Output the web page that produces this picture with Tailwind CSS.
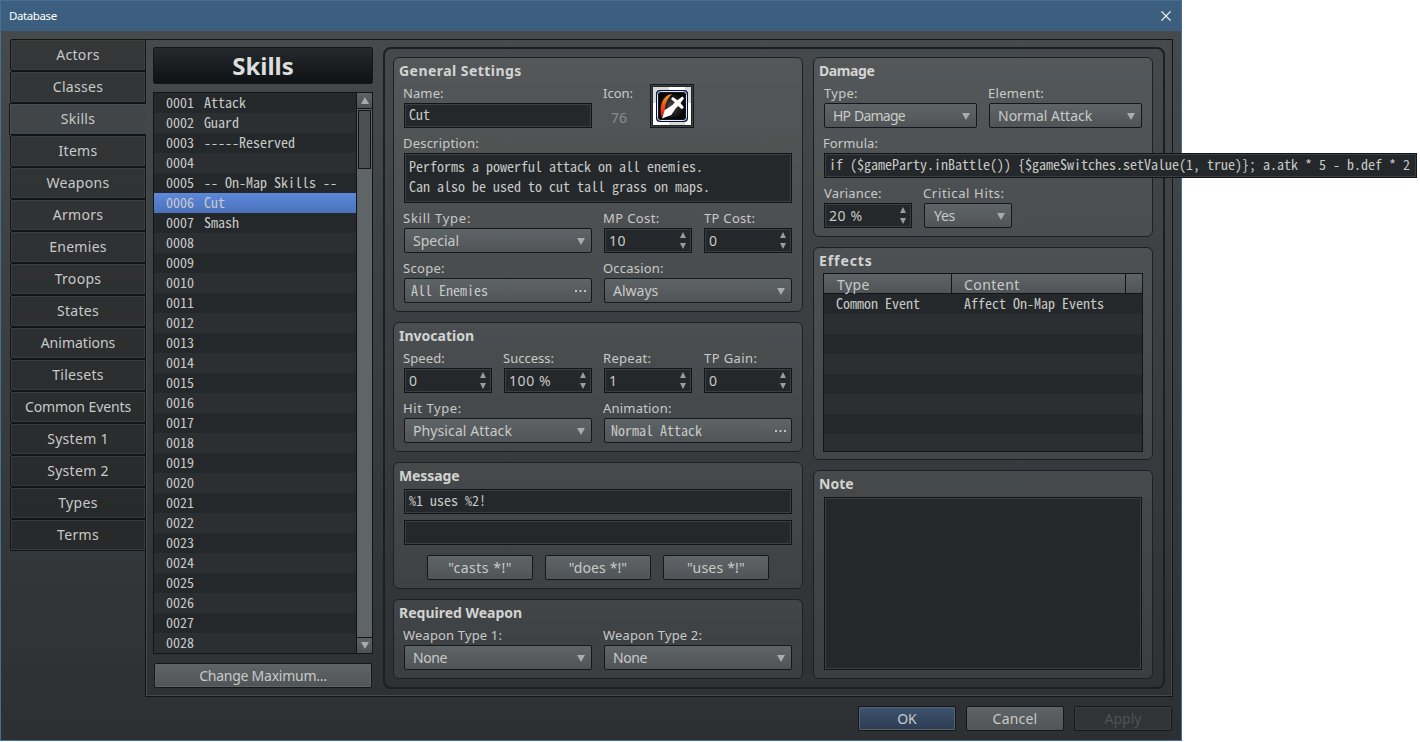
<!DOCTYPE html>
<html lang="en">
<head>
    <meta charset="UTF-8">
    <meta name="viewport" content="width=device-width, initial-scale=1.0">
    <title>Database</title>
    <script src="https://cdn.jsdelivr.net/npm/@tailwindcss/browser@4"></script>
</head>
<body class="bg-white h-[742px] overflow-hidden font-['Noto_Sans','Open_Sans',sans-serif] text-sm text-[#c8cac8]">
    <div class="w-[1182px] h-[741px] border border-[#476e93] bg-linear-to-b from-[#484b4d] to-[#2d3032] flex flex-col">
        <!-- Title bar -->
        <div class="h-[30px] shrink-0 bg-[#3c5f80] flex items-center justify-between pl-2 pr-[10px] text-white">
            <span class="text-[11.5px] leading-[30px] tracking-[-0.4px]">Database</span>
            <svg class="w-2.5 h-2.5 -mt-px" viewBox="0 0 11 11" fill="none" stroke="#fff" stroke-width="1.3"><path d="M.5.5l10 10M10.5.5l-10 10"/></svg>
        </div>

        <div class="flex pl-2 pt-2 h-[666px] shrink-0">
            <!-- Category tabs -->
            <div id="tabs" class="w-[137px] shrink-0 text-center text-[14px] leading-[30px] relative z-10"></div>

            <!-- Tab page -->
            <div class="w-[1028px] h-[658px] -ml-px border border-[#121517] shadow-[inset_0_0_0_1px_#45494b] flex pl-[7px] pt-[7px]">
                <!-- Skill list -->
                <div class="w-[220px] shrink-0">
                    <div class="h-[37px] border border-[#15181a] rounded-xs bg-linear-to-b from-[#262a2c] to-[#0f1214] text-center text-[24px] leading-[36px] font-bold text-[#dcdedc]">Skills</div>
                    <div class="mt-2 h-[562px] border border-[#121517] flex">
                        <div id="skills" class="w-[202px] shrink-0 font-['Noto_Sans_Mono_CJK_JP','Liberation_Mono',monospace] text-[14px] leading-[18px] whitespace-pre"></div>
                        <div class="w-4 border-l border-[#121517] bg-[#5f6466] flex flex-col justify-between shrink-0">
                            <div>
                                <div class="h-[15px] bg-linear-to-b from-[#5e6264] to-[#4d5153] flex items-center justify-center"><svg class="w-2 h-[7px]" viewBox="0 0 8 7" fill="#a9abac"><path d="M4 0l4 7H0z"/></svg></div>
                                <div class="h-px bg-[#121517]"></div>
                                <div class="h-[59px] mt-px mx-px border border-[#121517] bg-[#4b4f51]"></div>
                            </div>
                            <div class="h-4 border-t border-[#121517] bg-linear-to-b from-[#5e6264] to-[#4d5153] flex items-center justify-center"><svg class="w-2 h-[7px]" viewBox="0 0 8 7" fill="#a9abac"><path d="M4 7l4-7H0z"/></svg></div>
                        </div>
                    </div>
                    <button class="block mt-[9px] ml-px w-[218px] h-[25px] border border-[#15181a] rounded-xs bg-linear-to-b from-[#5f6466] to-[#505456] shadow-[inset_0_0_0_1px_#5f6466] leading-[24px] tracking-[-0.25px]">Change Maximum...</button>
                </div>

                <!-- Skill details -->
                <div class="ml-[10px] w-[782px] h-[642px] border-2 border-[#1c1f21] rounded-lg flex gap-[10px] pl-2 pt-2">
                    <div class="w-[410px] flex flex-col gap-[10px]">
                        <!-- General Settings -->
                        <section class="h-[255px] border border-[#1d2022] rounded-md bg-linear-to-b from-white/8 to-white/6 pl-[5px]">
                            <h2 class="h-[25px] leading-[26px] font-bold text-[#d2d4d2] tracking-[0.45px]">General Settings</h2>
                            <div class="ml-[5px] w-[388px]">
                                <div class="flex gap-3">
                                    <div class="w-[188px]">
                                        <div class="h-5 -ml-px leading-5 text-[13px] tracking-[0.1px]">Name:</div>
                                        <div class="h-[25px] border border-[#121517] bg-[#24282a] shadow-[inset_0_0_0_1px_#3b3f41] pl-1 leading-[21px] font-['Noto_Sans_Mono_CJK_JP','Liberation_Mono',monospace]">Cut</div>
                                    </div>
                                    <div class="w-[34px]">
                                        <div class="h-5 -ml-px leading-5 text-[13px]">Icon:</div>
                                        <div class="h-[25px] pl-[7px] leading-[29px] text-[#888c8d]">76</div>
                                    </div>
                                    <svg class="w-11 h-11 mt-px" viewBox="0 0 44 44">
                                        <path fill="#14171a" d="M0 0h44v44H0z"/>
                                        <path fill="#3b3f41" d="M1 1h42v42H1z"/>
                                        <path fill="#24282a" d="M2 2h40v40H2z"/>
                                        <path fill="#fff" d="M3 3h38v38H3z"/>
                                        <path fill="#d9d9d9" d="M3 3h16v16H3zM35 3h6v16h-6zM19 19h16v22H19z"/>
                                        <rect x="6" y="6" width="32" height="32" rx="4" fill="#06123a"/>
                                        <rect x="7.500" y="7.500" width="29" height="29" rx="3" fill="#161616" stroke="#dfe8f4"/>
                                        <rect x="9" y="9" width="26" height="26" rx="1.500" fill="url(#ico-bg)"/>
                                        <path fill="url(#ico-flame)" d="M22 10.300c-5 0-8.500 4-10.300 9-1.500 4.500-1.400 9 0 14.200l3.300-6.500c-.5-5.500 1.500-12 7-16.700z"/>
                                        <path fill="#fff" d="M12 34.500l2.800-8.500 7.400-4.800 2.600-2.700-3.800-3.500 1.800-2 4.700 3.300 4.800-3.800 1.800 1.800-3.600 4.700 3.300 4.300-1.800 1.900-4-3.300-2.400 2.700-4.300 6.500z"/>
                                        <defs>
                                            <radialGradient id="ico-bg"><stop stop-color="#484848"/><stop offset="1" stop-color="#080808"/></radialGradient>
                                            <linearGradient id="ico-flame" x2="0" y2="1"><stop stop-color="#f0a020"/><stop offset=".5" stop-color="#f05010"/><stop offset="1" stop-color="#f01010"/></linearGradient>
                                        </defs>
                                    </svg>
                                </div>
                                <div class="h-5 -ml-px mt-[5px] leading-5 text-[13px] tracking-[0.2px]">Description:</div>
                                <div class="h-[50px] border border-[#121517] bg-[#24282a] shadow-[inset_0_0_0_1px_#3b3f41] pl-1 pt-0.5 leading-5 font-['Noto_Sans_Mono_CJK_JP','Liberation_Mono',monospace]">Performs a powerful attack on all enemies.<br>Can also be used to cut tall grass on maps.</div>
                                <div class="flex gap-3 mt-[5px]">
                                    <div class="w-[188px]">
                                        <div class="h-5 -ml-px leading-5 text-[13px] tracking-[0.75px]">Skill Type:</div>
                                        <div class="select h-[25px] border border-[#15181a] rounded-xs bg-linear-to-b from-[#5f6466] to-[#505456] pl-2 pr-1.5 flex items-center justify-between leading-[23px]">Special</div>
                                    </div>
                                    <div class="w-[88px]">
                                        <div class="h-5 -ml-px leading-5 text-[13px] tracking-[0.4px]">MP Cost:</div>
                                        <div class="spin h-[25px] border border-[#121517] bg-[#24282a] shadow-[inset_0_0_0_1px_#3b3f41] pl-1 pr-[5px] flex items-center justify-between leading-[23px] tracking-[0.6px]">10</div>
                                    </div>
                                    <div class="w-[88px]">
                                        <div class="h-5 leading-5 text-[13px] tracking-[0.3px]">TP Cost:</div>
                                        <div class="spin h-[25px] border border-[#121517] bg-[#24282a] shadow-[inset_0_0_0_1px_#3b3f41] pl-1 pr-[5px] flex items-center justify-between leading-[23px]">0</div>
                                    </div>
                                </div>
                                <div class="flex gap-3 mt-[5px]">
                                    <div class="w-[188px]">
                                        <div class="h-5 -ml-px leading-5 text-[13px] tracking-[0.3px]">Scope:</div>
                                        <div class="more h-[25px] border border-[#15181a] rounded-xs bg-linear-to-b from-[#5f6466] to-[#505456] pl-1.5 pr-[5px] flex items-center justify-between leading-[23px] font-['Noto_Sans_Mono_CJK_JP','Liberation_Mono',monospace]">All Enemies</div>
                                    </div>
                                    <div class="w-[188px]">
                                        <div class="h-5 -ml-px leading-5 text-[13px] tracking-[0.2px]">Occasion:</div>
                                        <div class="select h-[25px] border border-[#15181a] rounded-xs bg-linear-to-b from-[#5f6466] to-[#505456] pl-2 pr-1.5 flex items-center justify-between leading-[23px]">Always</div>
                                    </div>
                                </div>
                            </div>
                        </section>

                        <!-- Invocation -->
                        <section class="h-[130px] border border-[#1d2022] rounded-md bg-linear-to-b from-white/8 to-white/6 pl-[5px]">
                            <h2 class="h-[25px] leading-[26px] font-bold text-[#d2d4d2]">Invocation</h2>
                            <div class="ml-[5px] w-[388px]">
                                <div class="flex gap-3">
                                    <div class="w-[88px]">
                                        <div class="h-5 -ml-px leading-5 text-[13px] tracking-[0.1px]">Speed:</div>
                                        <div class="spin h-[25px] border border-[#121517] bg-[#24282a] shadow-[inset_0_0_0_1px_#3b3f41] pl-1 pr-[5px] flex items-center justify-between leading-[23px]">0</div>
                                    </div>
                                    <div class="w-[88px]">
                                        <div class="h-5 -ml-px leading-5 text-[13px]">Success:</div>
                                        <div class="spin h-[25px] border border-[#121517] bg-[#24282a] shadow-[inset_0_0_0_1px_#3b3f41] pl-1 pr-[5px] flex items-center justify-between leading-[23px] tracking-[0.6px]">100 %</div>
                                    </div>
                                    <div class="w-[88px]">
                                        <div class="h-5 -ml-px leading-5 text-[13px] tracking-[0.3px]">Repeat:</div>
                                        <div class="spin h-[25px] border border-[#121517] bg-[#24282a] shadow-[inset_0_0_0_1px_#3b3f41] pl-1 pr-[5px] flex items-center justify-between leading-[23px]">1</div>
                                    </div>
                                    <div class="w-[88px]">
                                        <div class="h-5 leading-5 text-[13px] tracking-[0.4px]">TP Gain:</div>
                                        <div class="spin h-[25px] border border-[#121517] bg-[#24282a] shadow-[inset_0_0_0_1px_#3b3f41] pl-1 pr-[5px] flex items-center justify-between leading-[23px]">0</div>
                                    </div>
                                </div>
                                <div class="flex gap-3 mt-[5px]">
                                    <div class="w-[188px]">
                                        <div class="h-5 -ml-px leading-5 text-[13px] tracking-[0.6px]">Hit Type:</div>
                                        <div class="select h-[25px] border border-[#15181a] rounded-xs bg-linear-to-b from-[#5f6466] to-[#505456] pl-2 pr-1.5 flex items-center justify-between leading-[23px] tracking-[0.1px]">Physical Attack</div>
                                    </div>
                                    <div class="w-[188px]">
                                        <div class="h-5 -ml-px leading-5 text-[13px] tracking-[0.2px]">Animation:</div>
                                        <div class="more h-[25px] border border-[#15181a] rounded-xs bg-linear-to-b from-[#5f6466] to-[#505456] pl-1.5 pr-[5px] flex items-center justify-between leading-[23px] font-['Noto_Sans_Mono_CJK_JP','Liberation_Mono',monospace]">Normal Attack</div>
                                    </div>
                                </div>
                            </div>
                        </section>

                        <!-- Message -->
                        <section class="h-[127px] border border-[#1d2022] rounded-md bg-linear-to-b from-white/8 to-white/6 pl-[5px]">
                            <h2 class="h-[26px] leading-[26px] font-bold text-[#d2d4d2] tracking-[-0.1px]">Message</h2>
                            <div class="ml-[5px] w-[388px]">
                                <div class="h-[25px] border border-[#121517] bg-[#24282a] shadow-[inset_0_0_0_1px_#3b3f41] pl-1 leading-[21px] font-['Noto_Sans_Mono_CJK_JP','Liberation_Mono',monospace]">%1 uses %2!</div>
                                <div class="h-[25px] mt-1.5 border border-[#121517] bg-[#24282a] shadow-[inset_0_0_0_1px_#3b3f41]"></div>
                                <div class="flex gap-3 justify-center mt-[10px]">
                                    <button class="w-[106px] h-[25px] border border-[#15181a] rounded-xs bg-linear-to-b from-[#5f6466] to-[#505456] leading-[23px] tracking-[0.5px]">"casts *!"</button>
                                    <button class="w-[106px] h-[25px] border border-[#15181a] rounded-xs bg-linear-to-b from-[#5f6466] to-[#505456] leading-[23px] tracking-[0.1px]">"does *!"</button>
                                    <button class="w-[106px] h-[25px] border border-[#15181a] rounded-xs bg-linear-to-b from-[#5f6466] to-[#505456] leading-[23px] tracking-[0.2px]">"uses *!"</button>
                                </div>
                            </div>
                        </section>

                        <!-- Required Weapon -->
                        <section class="h-20 border border-[#1d2022] rounded-md bg-linear-to-b from-white/8 to-white/6 pl-[5px]">
                            <h2 class="h-[25px] leading-[26px] font-bold text-[#d2d4d2]">Required Weapon</h2>
                            <div class="ml-[5px] w-[388px] flex gap-3">
                                <div class="w-[188px]">
                                    <div class="h-5 -ml-px leading-5 text-[13px] tracking-[0.15px]">Weapon Type 1:</div>
                                    <div class="select h-[25px] border border-[#15181a] rounded-xs bg-linear-to-b from-[#5f6466] to-[#505456] pl-2 pr-1.5 flex items-center justify-between leading-[23px] tracking-[-0.4px]">None</div>
                                </div>
                                <div class="w-[188px]">
                                    <div class="h-5 -ml-px leading-5 text-[13px] tracking-[0.15px]">Weapon Type 2:</div>
                                    <div class="select h-[25px] border border-[#15181a] rounded-xs bg-linear-to-b from-[#5f6466] to-[#505456] pl-2 pr-1.5 flex items-center justify-between leading-[23px] tracking-[-0.4px]">None</div>
                                </div>
                            </div>
                        </section>
                    </div>

                    <div class="w-[340px] flex flex-col gap-[10px]">
                        <!-- Damage -->
                        <section class="h-[180px] border border-[#1d2022] rounded-md bg-linear-to-b from-white/8 to-white/6 pl-[5px]">
                            <h2 class="h-[25px] leading-[26px] font-bold text-[#d2d4d2] tracking-[-0.4px]">Damage</h2>
                            <div class="ml-[5px] w-[318px]">
                                <div class="flex gap-3">
                                    <div class="w-[153px]">
                                        <div class="h-5 leading-5 text-[13px] tracking-[0.3px]">Type:</div>
                                        <div class="select h-[25px] border border-[#15181a] rounded-xs bg-linear-to-b from-[#5f6466] to-[#505456] pl-2 pr-1.5 flex items-center justify-between leading-[23px] tracking-[-0.8px] [word-spacing:1px]">HP Damage</div>
                                    </div>
                                    <div class="w-[153px]">
                                        <div class="h-5 -ml-px leading-5 text-[13px] tracking-[0.3px]">Element:</div>
                                        <div class="select h-[25px] border border-[#15181a] rounded-xs bg-linear-to-b from-[#5f6466] to-[#505456] pl-2 pr-1.5 flex items-center justify-between leading-[23px]">Normal Attack</div>
                                    </div>
                                </div>
                                <div class="h-5 -ml-px mt-[5px] leading-5 text-[13px] tracking-[0.1px]">Formula:</div>
                                
                                <div class="w-[593px] h-[25px] border border-[#121517] bg-[#24282a] shadow-[inset_0_0_0_1px_#3b3f41] pl-1 leading-[21px] whitespace-nowrap font-['Noto_Sans_Mono_CJK_JP','Liberation_Mono',monospace]">if ($gameParty.inBattle()) {$gameSwitches.setValue(1, true)}; a.atk * 5 - b.def * 2</div>
                                <div class="flex gap-3 mt-[5px]">
                                    <div class="w-[88px]">
                                        <div class="h-5 leading-5 text-[13px] tracking-[0.2px]">Variance:</div>
                                        <div class="spin h-[25px] border border-[#121517] bg-[#24282a] shadow-[inset_0_0_0_1px_#3b3f41] pl-1 pr-[5px] flex items-center justify-between leading-[23px] tracking-[0.6px]">20 %</div>
                                    </div>
                                    <div class="w-[88px]">
                                        <div class="h-5 -ml-px leading-5 text-[13px] tracking-[0.65px] whitespace-nowrap">Critical Hits:</div>
                                        <div class="select h-[25px] border border-[#15181a] rounded-xs bg-linear-to-b from-[#5f6466] to-[#505456] pl-[9px] pr-1.5 flex items-center justify-between leading-[23px] tracking-[-0.3px]">Yes</div>
                                    </div>
                                </div>
                            </div>
                        </section>

                        <!-- Effects -->
                        <section class="h-[213px] border border-[#1d2022] rounded-md bg-linear-to-b from-white/8 to-white/6 pl-[5px]">
                            <h2 class="h-[25px] leading-[26px] font-bold text-[#d2d4d2] tracking-[0.9px]">Effects</h2>
                            <div class="ml-1 w-[320px] h-[179px] border border-[#121517] overflow-hidden">
                                <div class="h-5 border-b border-[#121517] bg-linear-to-b from-[#5f6466] to-[#505456] flex leading-[21px] tracking-[0.45px]">
                                    <div class="w-[128px] pl-[13px] border-r border-[#121517]">Type</div>
                                    <div class="w-[174px] pl-3 border-r border-[#121517]">Content</div>
                                </div>
                                <div id="effects" class="leading-[18px] font-['Noto_Sans_Mono_CJK_JP','Liberation_Mono',monospace]"></div>
                            </div>
                        </section>

                        <!-- Note -->
                        <section class="h-[209px] border border-[#1d2022] rounded-md bg-linear-to-b from-white/8 to-white/6 pl-[5px]">
                            <h2 class="h-[26px] leading-[26px] font-bold text-[#d2d4d2]">Note</h2>
                            <div class="ml-[5px] w-[318px] h-[173px] border border-[#121517] bg-[#24282a] shadow-[inset_0_0_0_1px_#3b3f41]"></div>
                        </section>
                    </div>
                </div>
            </div>
        </div>

        <!-- Dialog buttons -->
        <div class="flex justify-end gap-[10px] mt-[9px] pr-[9px]">
            <button class="w-[98px] h-[25px] border border-[#15181a] rounded-xs bg-linear-to-b from-[#3e5370] to-[#2c3c52] shadow-[inset_0_0_0_1px_#56626e] leading-[23px]">OK</button>
            <button class="w-[98px] h-[25px] border border-[#15181a] rounded-xs bg-linear-to-b from-[#5f6466] to-[#505456] leading-[23px] tracking-[0.2px]">Cancel</button>
            <button class="w-[98px] h-[25px] border border-[#15181a] rounded-xs bg-[#303436] shadow-[inset_0_0_0_1px_#3a3e40] leading-[23px] text-[#4f5355]">Apply</button>
        </div>
    </div>

    <script>
        const tabs = ['Actors', 'Classes', 'Skills', 'Items', 'Weapons', 'Armors', 'Enemies', 'Troops', 'States',
            'Animations', 'Tilesets', 'Common Events', 'System 1', 'System 2', 'Types', 'Terms'];
        // Long labels are set a little tighter than short ones
        document.getElementById('tabs').innerHTML = tabs.map(t => {
            const spacing = t.length > 10 ? 'tracking-[-0.1px]' : t.length > 8 ? 'tracking-[0px]' : 'tracking-[0.3px]';
            return t === 'Skills'
                ? `<div class="h-8 w-[137px] border border-r-0 border-[#121517] rounded-l-xs bg-[#424547] shadow-[inset_1px_1px_0_#4b4f51] ${spacing}">${t}</div>`
                : `<div class="h-8 ml-px w-[136px] border border-[#121517] rounded-l-xs bg-black/25 shadow-[inset_0_0_0_1px_#43474999] ${spacing}">${t}</div>`;
        }).join('');

        const names = ['Attack', 'Guard', '-----Reserved', '', '-- On-Map Skills --', 'Cut', 'Smash'];
        let rows = '';
        for (let i = 0; i < 28; i++) {
            const bg = i === 5 ? 'bg-linear-to-b from-[#5d89dc] to-[#4a71bb]' : i % 2 ? 'bg-[#2b2f31]' : 'bg-[#24282a]';
            rows += `<div class="h-5 pl-3 flex ${bg}"><span class="w-[38px]">${String(i + 1).padStart(4, '0')}</span><span>${names[i] || ''}</span></div>`;
        }
        document.getElementById('skills').innerHTML = rows;

        const effects = [['Common Event', 'Affect On-Map Events']];
        let list = '';
        for (let i = 0; i < 8; i++) {
            const [type, content] = effects[i] || ['', ''];
            list += `<div class="h-5 pl-3 flex ${i % 2 ? 'bg-[#2b2f31]' : 'bg-[#24282a]'}"><span class="w-[128px]">${type}</span><span>${content}</span></div>`;
        }
        document.getElementById('effects').innerHTML = list;

        // Arrows for combo boxes, spinners and "..." pickers
        const add = (sel, svg) => document.querySelectorAll(sel).forEach(el => el.insertAdjacentHTML('beforeend', svg));
        add('.select', '<svg class="w-2 h-2" viewBox="0 0 8 8" fill="#a9abac"><path d="M0 1h8L4 8z"/></svg>');
        add('.spin', '<svg class="w-1.5 h-[17px]" viewBox="0 0 6 17" fill="#9a9c9d"><path d="M3 0l3 6H0zM0 11h6l-3 6z"/></svg>');
        add('.more', '<svg class="w-[11px] h-0.5" viewBox="0 0 11 2" fill="#c0c2c2"><path d="M0 0h2v2H0zM4.500 0h2v2h-2zM9 0h2v2H9z"/></svg>');
    </script>
</body>
</html>
